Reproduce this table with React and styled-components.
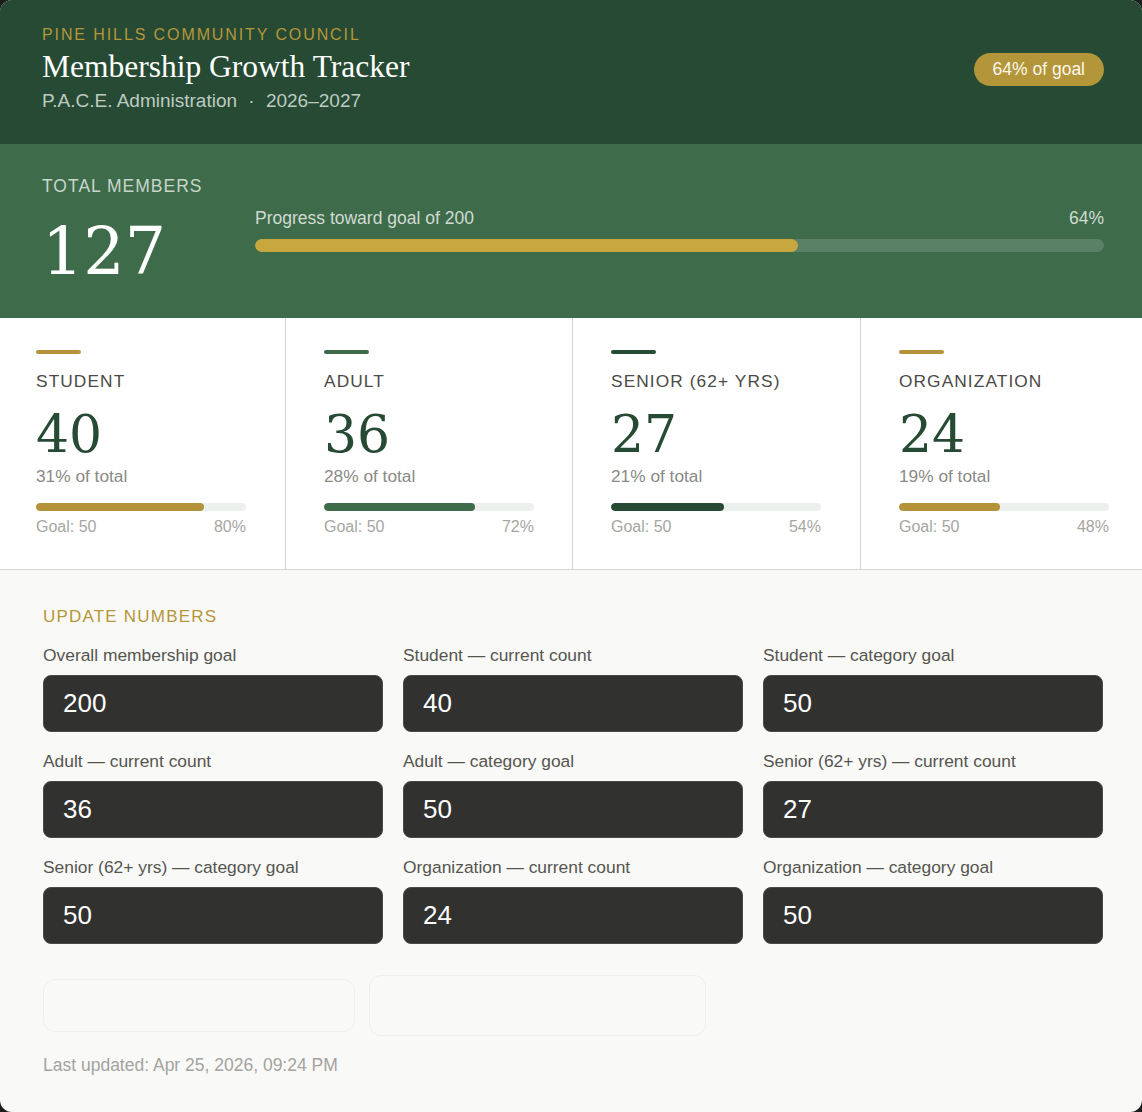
import React from "react";
import styled, { createGlobalStyle } from "styled-components";

const GlobalStyle = createGlobalStyle`
  html, body {
    margin: 0;
    padding: 0;
    background: #1c1c1c;
  }
  body {
    font-family: "Liberation Sans", Arial, sans-serif;
  }
`;

const SERIF = `"Liberation Serif", Georgia, serif`;
const FIGURES = `"DejaVu Serif", Georgia, serif`;

const colors = {
  gold: "#b5963a",
  goldBright: "#c9a73f",
  forest: "#264a33",
  moss: "#3e6b4a",
};

const categories = [
  { name: "Student", count: 40, goal: 50, color: "#b3923a" },
  { name: "Adult", count: 36, goal: 50, color: "#3e6b4a" },
  { name: "Senior (62+ yrs)", count: 27, goal: 50, color: "#264a33" },
  { name: "Organization", count: 24, goal: 50, color: "#b3923a" },
];

const fields = [
  ["Overall membership goal", 200],
  ["Student — current count", 40],
  ["Student — category goal", 50],
  ["Adult — current count", 36],
  ["Adult — category goal", 50],
  ["Senior (62+ yrs) — current count", 27],
  ["Senior (62+ yrs) — category goal", 50],
  ["Organization — current count", 24],
  ["Organization — category goal", 50],
];

const total = categories.reduce((s, c) => s + c.count, 0);
const overallGoal = 200;

export default function App() {
  const overallPct = Math.round((total / overallGoal) * 100);
  return (
    <>
      <GlobalStyle />
      <Card>
        <Header>
          <div>
            <Eyebrow>Pine Hills Community Council</Eyebrow>
            <Title>Membership Growth Tracker</Title>
            <Subtitle>
              P.A.C.E. Administration <Dot>·</Dot> 2026–2027
            </Subtitle>
          </div>
          <Badge>{overallPct}% of goal</Badge>
        </Header>

        <TotalBand>
          <TotalBlock>
            <TotalLabel>Total Members</TotalLabel>
            <TotalNumber>{total}</TotalNumber>
          </TotalBlock>
          <ProgressBlock>
            <ProgressHead>
              <span>Progress toward goal of {overallGoal}</span>
              <span>{overallPct}%</span>
            </ProgressHead>
            <Track $bg="#5a8066" $h={13}>
              <Fill $color={colors.goldBright} style={{ width: `${overallPct}%` }} />
            </Track>
          </ProgressBlock>
        </TotalBand>

        <CategoryGrid>
          {categories.map((c) => {
            const share = Math.round((c.count / total) * 100);
            const pct = Math.round((c.count / c.goal) * 100);
            return (
              <Category key={c.name}>
                <Accent $color={c.color} />
                <CatLabel>{c.name}</CatLabel>
                <CatNumber>{c.count}</CatNumber>
                <CatShare>{share}% of total</CatShare>
                <Track $bg="#ecf0ed" $h={8}>
                  <Fill $color={c.color} style={{ width: `${pct}%` }} />
                </Track>
                <GoalRow>
                  <span>Goal: {c.goal}</span>
                  <span>{pct}%</span>
                </GoalRow>
              </Category>
            );
          })}
        </CategoryGrid>

        <FormSection>
          <SectionTitle>Update Numbers</SectionTitle>
          <FieldGrid>
            {fields.map(([label, value]) => (
              <Field key={label}>
                <FieldLabel>{label}</FieldLabel>
                <Input type="number" defaultValue={value} />
              </Field>
            ))}
          </FieldGrid>
          <Actions>
            <GhostButton $h={53} $w={312}>Save &amp; update dashboard</GhostButton>
            <GhostButton $h={61} $w={337}>Generate report summary ↗</GhostButton>
          </Actions>
          <Updated>Last updated: Apr 25, 2026, 09:24 PM</Updated>
        </FormSection>
      </Card>
    </>
  );
}

const Card = styled.div`
  width: 1142px;
  min-height: 1112px;
  border-radius: 12px;
  overflow: hidden;
  background: #f9f9f7;
`;

const Header = styled.header`
  background: ${colors.forest};
  height: 144px;
  box-sizing: border-box;
  padding: 26px 38px 0 42px;
  display: flex;
  justify-content: space-between;
  align-items: flex-start;
`;

const Eyebrow = styled.div`
  color: ${colors.gold};
  font-size: 16px;
  letter-spacing: 1.9px;
  text-transform: uppercase;
  line-height: 18px;
`;

const Title = styled.h1`
  margin: 5px 0 0;
  font-family: ${SERIF};
  font-weight: 400;
  font-size: 31.5px;
  line-height: 36px;
  color: #ffffff;
`;

const Subtitle = styled.div`
  margin-top: 5px;
  color: #bfcbc2;
  font-size: 19px;
  line-height: 22px;
`;

const Dot = styled.span`
  margin: 0 6px;
`;

const Badge = styled.div`
  margin-top: 27px;
  background: #b3953a;
  color: #fbf7ea;
  font-size: 17.5px;
  height: 33px;
  line-height: 33px;
  padding: 0 19px;
  border-radius: 17px;
`;

const TotalBand = styled.section`
  background: ${colors.moss};
  height: 174px;
  box-sizing: border-box;
  padding: 32px 38px 0 42px;
  display: flex;
  gap: 88px;
`;

const TotalBlock = styled.div`
  width: 125px;
  flex-shrink: 0;
`;

const TotalLabel = styled.div`
  color: #c7d5ca;
  font-size: 17.5px;
  letter-spacing: 1px;
  text-transform: uppercase;
  line-height: 20px;
  white-space: nowrap;
`;

const TotalNumber = styled.div`
  margin-top: 16px;
  font-family: ${FIGURES};
  color: #ffffff;
  font-size: 65px;
  line-height: 80px;
`;

const ProgressBlock = styled.div`
  flex: 1;
  padding-top: 32px;
`;

const ProgressHead = styled.div`
  display: flex;
  justify-content: space-between;
  color: #d0dbd3;
  font-size: 17.5px;
  line-height: 20px;
  margin-bottom: 11px;
`;

const Track = styled.div`
  height: ${(p) => p.$h}px;
  border-radius: ${(p) => p.$h / 2}px;
  background: ${(p) => p.$bg};
  overflow: hidden;
`;

const Fill = styled.div`
  height: 100%;
  border-radius: inherit;
  background: ${(p) => p.$color};
`;

const CategoryGrid = styled.section`
  display: grid;
  grid-template-columns: 285px 287px 288px 1fr;
  background: #ffffff;
  border-bottom: 1px solid #d6d6d4;
`;

const Category = styled.div`
  padding: 32px 0 32px 36px;
  & + & {
    padding-left: 38px;
    border-left: 1px solid #d6d6d4;
  }
  & > * {
    width: 210px;
  }
`;

const Accent = styled.div`
  width: 45px !important;
  height: 4px;
  border-radius: 2px;
  background: ${(p) => p.$color};
`;

const CatLabel = styled.div`
  margin-top: 17px;
  color: #4a4a46;
  font-size: 17.3px;
  letter-spacing: 1.1px;
  text-transform: uppercase;
  line-height: 20px;
  white-space: nowrap;
`;

const CatNumber = styled.div`
  margin-top: 14px;
  font-family: ${FIGURES};
  color: #264a33;
  font-size: 52px;
  line-height: 58px;
`;

const CatShare = styled.div`
  margin-top: 3px;
  color: #8a8a86;
  font-size: 17.3px;
  line-height: 20px;
  margin-bottom: 17px;
`;

const GoalRow = styled.div`
  margin-top: 6px;
  display: flex;
  justify-content: space-between;
  color: #a6a6a2;
  font-size: 16px;
  line-height: 20px;
`;

const FormSection = styled.section`
  padding: 36px 39px 34px 43px;
`;

const SectionTitle = styled.h2`
  margin: 0;
  color: ${colors.gold};
  font-weight: 400;
  font-size: 17px;
  letter-spacing: 1.2px;
  text-transform: uppercase;
  line-height: 21px;
`;

const FieldGrid = styled.div`
  margin-top: 18px;
  display: grid;
  grid-template-columns: repeat(3, 1fr);
  column-gap: 20px;
  row-gap: 19px;
`;

const Field = styled.label`
  display: flex;
  flex-direction: column;
  gap: 9px;
`;

const FieldLabel = styled.span`
  color: #55554f;
  font-size: 17.4px;
  line-height: 21px;
`;

const Input = styled.input`
  box-sizing: border-box;
  height: 57px;
  width: 100%;
  border: 1px solid #4a4a47;
  border-radius: 8px;
  background: #31312f;
  color: #ffffff;
  font-family: "Liberation Sans", Arial, sans-serif;
  font-size: 26px;
  padding: 0 19px;
  outline: none;
  -moz-appearance: textfield;
  &::-webkit-outer-spin-button,
  &::-webkit-inner-spin-button {
    -webkit-appearance: none;
    margin: 0;
  }
`;

const Actions = styled.div`
  margin-top: 31px;
  display: flex;
  align-items: center;
  gap: 14px;
`;

const GhostButton = styled.button`
  height: ${(p) => p.$h}px;
  width: ${(p) => p.$w}px;
  border: 1px solid #efefec;
  border-radius: 12px;
  background: #f9f9f7;
  color: #f9f9f7;
  font-family: "Liberation Sans", Arial, sans-serif;
  font-size: 18px;
  text-shadow: 0 0 0 rgba(0, 0, 0, 0.02);
`;

const Updated = styled.div`
  margin-top: 19px;
  color: #a3a3a0;
  font-size: 17.5px;
  line-height: 21px;
`;
